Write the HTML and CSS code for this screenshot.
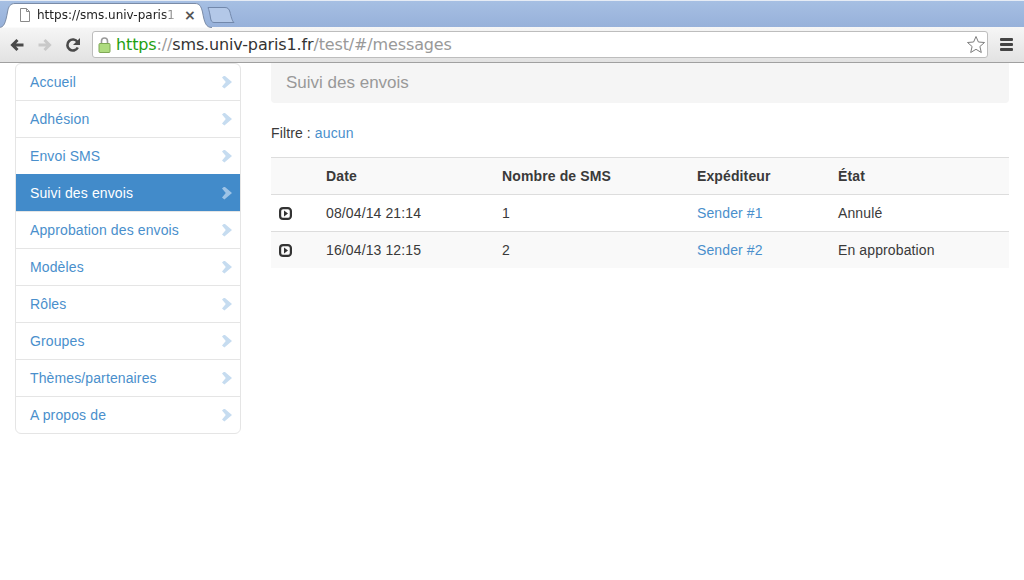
FILE: index.html
```html
<!DOCTYPE html>
<html>
<head>
    <meta charset="utf-8">
    <title>Suivi des envois</title>
    <link rel="stylesheet" href="styles.css">
</head>
<body>
<div class="tabstrip">
    <div class="tab">
        <svg class="tab-shape" width="212" height="27" viewBox="0 0 212 27">
            <path d="M-1 26.500 C4 26.500 5.500 22 7.500 11 C8.500 5 10.500 2.500 15 2.500 L195 2.500 C199.500 2.500 201 5 202.500 11 C204.500 22 206 26.500 212 26.500" fill="#fff" stroke="#7a8ba6"/>
        </svg>
        <svg class="tab-page" width="12" height="15" viewBox="0 0 12 15">
            <path d="M1.500 .5 H7.500 L10.500 3.500 V13.500 H1.500 Z M7.500 .5 V3.500 H10.500" fill="#fff" stroke="#8a8a8a"/>
        </svg>
        <span class="tab-title">https://sms.univ-paris1</span>
        <span class="tab-close">×</span>
    </div>
    <svg class="new-tab" width="30" height="18" viewBox="0 0 30 18">
        <path d="M1 1.500 H18 C21 1.500 22 3 23 6 C24 10 25 15 27 16.500 H7 C5 16.500 4 15 3.500 12 C3 8 2 4 1 1.500 Z" fill="#b3c8e8" stroke="#7288ab"/>
    </svg>
</div>
<div class="toolbar">
    <svg class="nav-icon" width="16" height="16" viewBox="0 0 16 16">
        <path d="M14.500 8 H4 M8.500 3 L3.500 8 L8.500 13" fill="none" stroke="#4a4a4a" stroke-width="3"/>
    </svg>
    <svg class="nav-icon" width="16" height="16" viewBox="0 0 16 16">
        <path d="M1.500 8 H12 M7.500 3 L12.500 8 L7.500 13" fill="none" stroke="#c9c9c9" stroke-width="3"/>
    </svg>
    <svg class="nav-icon" width="16" height="16" viewBox="0 0 16 16">
        <path d="M12.800 10.500 A5.500 5.500 0 1 1 12.500 5" fill="none" stroke="#4a4a4a" stroke-width="2.600"/>
        <path d="M15 1 V8 H8 Z" fill="#4a4a4a"/>
    </svg>
    <div class="omnibox">
        <svg class="lock" width="13" height="18" viewBox="0 0 13 18">
            <path d="M3.500 8 V5 A3 3 0 0 1 9.500 5 V8" fill="none" stroke="#9a9a9a" stroke-width="1.600"/>
            <rect x="1" y="7.500" width="11" height="9" rx="1" fill="#aedb7f" stroke="#7fa856"/>
        </svg>
        <span class="url"><span class="url-https">https</span><span class="url-dim">://</span><span class="url-host">sms.univ-paris1.fr</span><span class="url-dim">/test/#/messages</span></span>
        <svg class="star" width="20" height="19" viewBox="0 0 20 19">
            <path d="M10 1.500 L12.400 7 L18.500 7.500 L13.900 11.500 L15.300 17.500 L10 14.300 L4.700 17.500 L6.100 11.500 L1.500 7.500 L7.600 7 Z" fill="#fff" stroke="#7d7d7d"/>
        </svg>
    </div>
    <div class="menu-icon"><span></span><span></span><span></span></div>
</div>
<div class="page">
    <ul class="side-nav">
        <li><a href="#">Accueil<i class="chevron"></i></a></li>
        <li><a href="#">Adhésion<i class="chevron"></i></a></li>
        <li><a href="#">Envoi SMS<i class="chevron"></i></a></li>
        <li class="active"><a href="#">Suivi des envois<i class="chevron"></i></a></li>
        <li><a href="#">Approbation des envois<i class="chevron"></i></a></li>
        <li><a href="#">Modèles<i class="chevron"></i></a></li>
        <li><a href="#">Rôles<i class="chevron"></i></a></li>
        <li><a href="#">Groupes<i class="chevron"></i></a></li>
        <li><a href="#">Thèmes/partenaires<i class="chevron"></i></a></li>
        <li><a href="#">A propos de<i class="chevron"></i></a></li>
    </ul>
    <div class="content">
        <div class="page-title">Suivi des envois</div>
        <p class="filter">Filtre : <a href="#">aucun</a></p>
        <table class="messages">
            <colgroup>
                <col class="col-icon"><col class="col-date"><col class="col-count"><col class="col-sender"><col>
            </colgroup>
            <thead>
                <tr><th></th><th>Date</th><th>Nombre de SMS</th><th>Expéditeur</th><th>État</th></tr>
            </thead>
            <tbody>
                <tr>
                    <td><svg class="play" width="13" height="13" viewBox="0 0 13 13"><rect x="1.100" y="1.100" width="10.800" height="10.800" rx="3" fill="none" stroke="#333" stroke-width="2.200"/><path d="M5 3.500 L9 6.500 L5 9.500 Z" fill="#333"/></svg></td>
                    <td>08/04/14 21:14</td><td>1</td><td><a href="#">Sender #1</a></td><td>Annulé</td>
                </tr>
                <tr>
                    <td><svg class="play" width="13" height="13" viewBox="0 0 13 13"><rect x="1.100" y="1.100" width="10.800" height="10.800" rx="3" fill="none" stroke="#333" stroke-width="2.200"/><path d="M5 3.500 L9 6.500 L5 9.500 Z" fill="#333"/></svg></td>
                    <td>16/04/13 12:15</td><td>2</td><td><a href="#">Sender #2</a></td><td>En approbation</td>
                </tr>
            </tbody>
        </table>
    </div>
</div>
</body>
</html>
```

FILE: styles.css
```css
html, body {margin:0; padding:0; height:100%; overflow:hidden; background:#fff;}
body {font-family:"Liberation Sans", Arial, sans-serif; font-size:14px; line-height:20px; color:#3a3a3a; letter-spacing:.12px;}
a {color:#4a8fcc; text-decoration:none;}

/* browser chrome */
.tabstrip {height:26px; display:flex; align-items:flex-end; background:linear-gradient(#a6bfe3, #97b1da); border-top:1px solid #e6ecf5; border-bottom:1px solid #6d7f9c; margin-bottom:-1px; letter-spacing:0;}
.tab {position:relative; width:216px; height:26px; flex:none; display:flex; align-items:center; top:1px;}
.tab-shape {position:absolute; left:0; top:-1px;}
.tab-page {position:relative; margin-left:19px; flex:none;}
.tab-title {position:relative; margin-left:6px; width:140px; overflow:hidden; white-space:nowrap; font-family:"DejaVu Sans", sans-serif; font-size:12px; color:#222; -webkit-mask-image:linear-gradient(to right, #000 90%, rgba(0,0,0,.3) 98%); mask-image:linear-gradient(to right, #000 90%, rgba(0,0,0,.3) 98%);}
.tab-close {position:relative; margin-left:7px; font-family:"DejaVu Sans", sans-serif; font-size:14px; font-weight:bold; color:#555;}
.new-tab {margin-left:-9px; margin-bottom:3px; flex:none;}
.toolbar {height:35px; display:flex; align-items:center; padding:0 11px 0 9px; background:linear-gradient(#f6f6f6, #e2e2e2); border-bottom:1px solid #a0a0a0; letter-spacing:0;}
.nav-icon {flex:none; margin-right:12px;}
.omnibox {flex:1; height:25px; margin-left:-1px; margin-right:12px; display:flex; align-items:center; background:#fff; border:1px solid #bdbdbd; border-radius:3px; padding:0 1px 0 5px;}
.lock {flex:none;}
.url {flex:1; margin-left:5px; font-family:"DejaVu Sans", sans-serif; font-size:16px; letter-spacing:-.14px; white-space:nowrap;}
.url-https {color:#1fa010;}
.url-dim {color:#999;}
.url-host {color:#333;}
.star {flex:none;}
.menu-icon {flex:none; width:13px; display:flex; flex-direction:column; gap:2px;}
.menu-icon span {height:3px; background:#444; border-radius:1px;}

/* page */
.page {display:flex; align-items:flex-start; padding:0 15px;}
.side-nav {list-style:none; margin:0 30px 0 0; padding:0; width:226px; flex:none; box-sizing:border-box; border:1px solid #e5e5e5; border-radius:6px; overflow:hidden;}
.side-nav li {border-top:1px solid #e5e5e5;}
.side-nav li:first-child {border-top:0;}
.side-nav a {display:flex; justify-content:space-between; align-items:center; height:36px; padding:0 8px 0 14px;}
.side-nav li.active {border-top-color:#428bca;}
.side-nav li.active a {background:#428bca; color:#fff;}
.chevron {width:10px; height:13px; background:#c6dcf0; clip-path:polygon(0 16%, 24% 0, 100% 50%, 24% 100%, 0 84%, 38% 50%);}
.active .chevron {background:#9dc3e6;}
.content {flex:1; min-width:0;}
.page-title {height:40px; line-height:39px; padding:0 15px; font-size:17px; letter-spacing:0; color:#999; background:#f5f5f5; border-radius:0 0 4px 4px;}
.filter {margin:20px 0 14px 0;}
.messages {width:100%; border-collapse:collapse; table-layout:fixed;}
.col-icon {width:47px;}
.col-date {width:176px;}
.col-count {width:195px;}
.col-sender {width:141px;}
.messages th {height:36px; padding:0 8px; text-align:left; font-weight:bold; background:#f9f9f9; border-top:1px solid #ddd; border-bottom:1px solid #ddd;}
.messages td {height:36px; padding:0 8px; border-top:1px solid #ddd;}
.messages thead + tbody tr:first-child td {border-top:0;}
.messages tbody tr:nth-child(2) td {background:#f9f9f9;}
.play {display:block;}
```
